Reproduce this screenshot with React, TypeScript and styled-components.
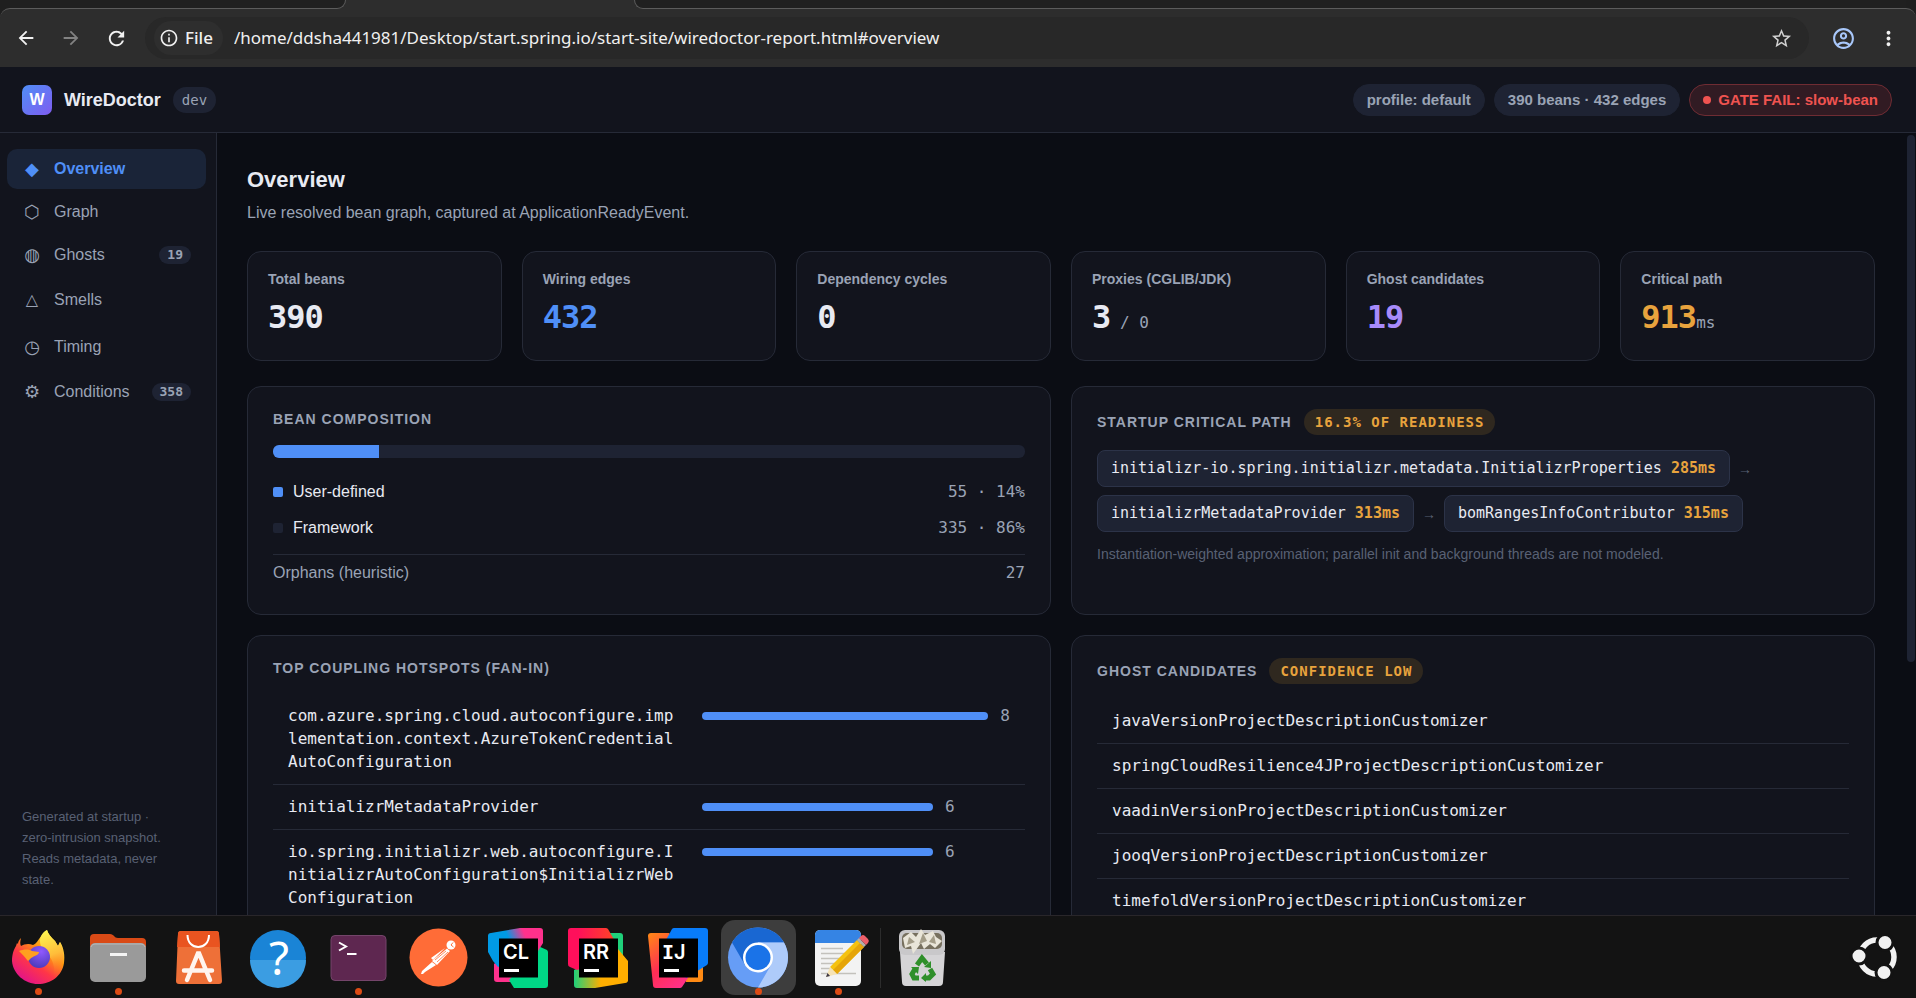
import React from "react";
import styled, { createGlobalStyle } from "styled-components";
import {
  MdArrowBack,
  MdArrowForward,
  MdRefresh,
  MdInfoOutline,
  MdStarBorder,
  MdOutlineAccountCircle,
  MdMoreVert,
} from "react-icons/md";

const color = {
  bg: "#0b0d14",
  surface: "#12141d",
  raised: "#1e2333",
  line: "#262a37",
  text: "#e8eaf2",
  muted: "#9aa3b5",
  faint: "#596174",
  blue: "#4f8ff7",
  purple: "#a78bfa",
  amber: "#e8a33d",
  red: "#ef5350",
};

const mono = `"DejaVu Sans Mono", monospace`;

const GlobalStyle = createGlobalStyle`
  *, *::before, *::after { box-sizing: border-box; }
  body {
    margin: 0;
    background: ${color.bg};
    color: ${color.text};
    font-family: "Liberation Sans", Arial, sans-serif;
    font-size: 16px;
    line-height: 24px;
  }
  a { color: inherit; text-decoration: none; }
  button { font: inherit; color: inherit; border: 0; padding: 0; background: none; cursor: pointer; }
`;

const Desktop = styled.div`
  height: 100vh;
  display: flex;
  flex-direction: column;
  overflow: hidden;
`;

/* ---------- browser chrome ---------- */

const TabStrip = styled.div`
  display: flex;
  height: 8px;
  flex: none;
  background: #1f1f1f;
`;

const IdleTab = styled.div<{ $side: "left" | "right" }>`
  position: relative;
  z-index: 2;
  height: 9px;
  background: #202020;
  border-bottom: 1px solid #5c5c5c;
  ${(p) =>
    p.$side === "left"
      ? `width: 336px; margin-left: 10px; border-right: 1px solid #5c5c5c; border-bottom-right-radius: 10px;`
      : `flex: 1; margin-right: 10px; border-left: 1px solid #5c5c5c; border-bottom-left-radius: 10px;`}
`;

const ActiveTab = styled.div`
  position: relative;
  z-index: 1;
  width: 308px;
  height: 9px;
  margin: 0 -10px;
  background: #2d2d2d;
`;

const ToolbarBack = styled.div`
  background: #1f1f1f;
  flex: none;
`;

const Toolbar = styled.div`
  display: flex;
  align-items: center;
  height: 59px;
  padding: 0 12px 0 10px;
  background: #2d2d2d;
  border-top: 1px solid #5c5c5c;
  border-radius: 10px 10px 0 0;
`;

const ToolButton = styled.button<{ $tone?: string }>`
  display: grid;
  place-items: center;
  width: 32px;
  height: 32px;
  margin-right: 13px;
  color: ${(p) => p.$tone ?? "#f1f1f1"};
  &:last-child { margin-right: 0; }
`;

const Omnibox = styled.div`
  display: flex;
  align-items: center;
  flex: 1;
  height: 42px;
  margin-right: 18px;
  padding: 0 12px 0 9px;
  background: #282828;
  border-radius: 21px;
  font-family: "Noto Sans", "Open Sans", sans-serif;
  font-size: 17px;
  color: #f0f0f0;
`;

const SchemeChip = styled.button`
  display: flex;
  align-items: center;
  gap: 6px;
  height: 34px;
  padding: 0 10px 0 5px;
  border-radius: 17px;
  background: #2e2e2e;
  font-weight: 500;
`;

const Address = styled.input`
  flex: 1;
  min-width: 0;
  margin-left: 11px;
  padding: 0;
  border: 0;
  outline: 0;
  background: transparent;
  color: inherit;
  font: inherit;
`;

/* ---------- report header ---------- */

const Header = styled.header`
  display: flex;
  align-items: center;
  justify-content: space-between;
  flex: none;
  height: 66px;
  padding: 0 24px 0 22px;
  background: ${color.surface};
  border-bottom: 1px solid ${color.line};
`;

const Brand = styled.div`
  display: flex;
  align-items: center;
  gap: 12px;
  font-size: 18px;
  font-weight: 700;
`;

const BrandMark = styled.div`
  display: grid;
  place-items: center;
  width: 30px;
  height: 30px;
  border-radius: 7px;
  background: linear-gradient(135deg, #4f8ff7, #7f5cf0);
  color: #fff;
  font-size: 16px;
`;

const VersionTag = styled.span`
  padding: 0 9px;
  border-radius: 13px;
  background: ${color.raised};
  color: ${color.muted};
  font: 400 14px/26px ${mono};
`;

const Pills = styled.div`
  display: flex;
  gap: 9px;
`;

const Pill = styled.span<{ $danger?: boolean }>`
  display: flex;
  align-items: center;
  gap: 7px;
  height: 32px;
  padding: 0 13px;
  border-radius: 16px;
  border: 1px solid ${(p) => (p.$danger ? "#6f2c33" : color.raised)};
  background: ${(p) => (p.$danger ? "#311b23" : color.raised)};
  color: ${(p) => (p.$danger ? color.red : color.muted)};
  font-size: 15px;
  font-weight: 700;
`;

const PillDot = styled.i`
  width: 8px;
  height: 8px;
  border-radius: 50%;
  background: currentColor;
`;

/* ---------- body ---------- */

const Body = styled.div`
  display: flex;
  flex: 1;
  min-height: 0;
`;

const Sidebar = styled.aside`
  display: flex;
  flex-direction: column;
  justify-content: space-between;
  width: 217px;
  flex: none;
  padding: 16px 10px 25px 7px;
  background: ${color.surface};
  border-right: 1px solid ${color.line};
`;

const Nav = styled.nav`
  display: flex;
  flex-direction: column;
  gap: 3px;
`;

const NavLink = styled.a<{ $active?: boolean; $tall?: boolean }>`
  display: flex;
  align-items: center;
  gap: 12px;
  height: ${(p) => (p.$tall ? 44 : 40)}px;
  padding: 0 15px;
  border-radius: 10px;
  background: ${(p) => (p.$active ? "#1a2438" : "transparent")};
  color: ${(p) => (p.$active ? color.blue : color.muted)};
  font-weight: ${(p) => (p.$active ? 700 : 400)};
`;

const NavGlyph = styled.span<{ $small?: boolean }>`
  width: 20px;
  text-align: center;
  font-family: "DejaVu Sans", sans-serif;
  font-size: ${(p) => (p.$small ? 16 : 18)}px;
  font-weight: 400;
  line-height: 24px;
`;

const NavCount = styled.span`
  margin-left: auto;
  padding: 0 8px;
  border-radius: 9px;
  background: ${color.raised};
  font: 700 13px/18px ${mono};
`;

const SideNote = styled.p`
  margin: 0;
  padding: 0 25px 0 15px;
  color: ${color.faint};
  font-size: 13px;
  line-height: 21px;
`;

const Main = styled.main`
  flex: 1;
  min-width: 0;
  overflow: hidden;
  padding: 30px;
`;

const ScrollTrack = styled.div`
  flex: none;
  width: 11px;
  padding: 2px 1px 0 2px;
`;

const ScrollThumb = styled.div`
  height: 67.5%;
  border-radius: 4px;
  background: ${color.raised};
`;

const PageTitle = styled.h1`
  margin: 0 0 5px;
  font-size: 22px;
  line-height: 33px;
`;

const Lead = styled.p`
  margin: 0 0 26px;
  color: ${color.muted};
`;

const Stats = styled.section`
  display: grid;
  grid-template-columns: repeat(6, 1fr);
  gap: 20px;
  margin-bottom: 25px;
`;

const StatCard = styled.div`
  padding: 17px 20px 19px;
  background: ${color.surface};
  border: 1px solid ${color.line};
  border-radius: 14px;
`;

const StatLabel = styled.div`
  margin-bottom: 3px;
  color: ${color.muted};
  font-size: 14px;
  font-weight: 700;
  line-height: 21px;
`;

const StatValue = styled.div<{ $tone?: string }>`
  color: ${(p) => p.$tone ?? color.text};
  font: 700 32px/48px ${mono};
  letter-spacing: -1px;
  white-space: pre;
`;

const StatUnit = styled.span`
  color: ${color.muted};
  font-size: 16px;
  font-weight: 400;
  line-height: 16px;
  letter-spacing: 0;
`;

const Panels = styled.div`
  display: grid;
  grid-template-columns: 1fr 1fr;
  gap: 20px;
`;

const Panel = styled.section`
  min-width: 0;
  padding: 22px 25px 23px;
  background: ${color.surface};
  border: 1px solid ${color.line};
  border-radius: 14px;
`;

const PanelTitle = styled.h2`
  display: flex;
  align-items: center;
  gap: 12px;
  margin: 0 0 15px;
  color: ${color.muted};
  font-size: 14px;
  line-height: 21px;
  letter-spacing: 1px;
  text-transform: uppercase;
`;

const TitleTag = styled.span`
  padding: 0 11px;
  border-radius: 13px;
  background: #2f281f;
  color: ${color.amber};
  font: 700 14px/26px ${mono};
`;

const Meter = styled.div`
  height: 13px;
  margin-bottom: 16px;
  border-radius: 6px;
  overflow: hidden;
  background: ${color.raised};
`;

const MeterFill = styled.div`
  height: 100%;
  background: ${color.blue};
`;

const LegendRow = styled.div<{ $summary?: boolean }>`
  display: flex;
  align-items: center;
  gap: 10px;
  padding: 6px 0;
  ${(p) =>
    p.$summary &&
    `margin-top: 8px; border-top: 1px solid ${color.line}; color: ${color.muted};`}
`;

const Swatch = styled.i<{ $tone: string }>`
  width: 10px;
  height: 10px;
  border-radius: 2px;
  background: ${(p) => p.$tone};
`;

const LegendValue = styled.span`
  margin-left: auto;
  color: ${color.muted};
  font-family: ${mono};
`;

const Path = styled.div`
  display: flex;
  flex-wrap: wrap;
  align-items: center;
  gap: 8px;
  margin-bottom: 10px;
`;

const PathStep = styled.span`
  padding: 0 13px;
  border: 1px solid #2c3348;
  border-radius: 8px;
  background: ${color.raised};
  font: 400 15px/35px ${mono};
  & > b { color: ${color.amber}; }
`;

const PathArrow = styled.span`
  color: ${color.faint};
  font-size: 14px;
`;

const Note = styled.p`
  margin: 0;
  color: ${color.faint};
  font-size: 14px;
`;

const HotspotTable = styled.table`
  width: 100%;
  table-layout: fixed;
  border-collapse: separate;
  border-spacing: 0;
  font: 400 16px/23px ${mono};
`;

const HotspotName = styled.td`
  width: 55%;
  padding: 10px 10px 11px 15px;
  border-bottom: 1px solid ${color.line};
  vertical-align: top;
  word-break: break-all;
`;

const HotspotScore = styled.td`
  padding: 10px 15px 11px;
  border-bottom: 1px solid ${color.line};
  vertical-align: top;
`;

const ScoreRow = styled.div`
  display: flex;
  align-items: center;
  gap: 12px;
  color: ${color.muted};
`;

const ScoreBar = styled.div`
  height: 8px;
  border-radius: 4px;
  background: ${color.blue};
`;

const GhostList = styled.ul`
  margin: 0;
  padding: 0;
  list-style: none;
  font: 400 16px/23px ${mono};
`;

const GhostItem = styled.li`
  padding: 10px 15px 11px;
  border-bottom: 1px solid ${color.line};
`;

/* ---------- dock ---------- */

const Dock = styled.footer`
  display: flex;
  align-items: flex-start;
  flex: none;
  gap: 5px;
  height: 83px;
  padding: 4px 2px 0 1px;
  background: #131313;
  border-top: 1px solid #29262a;
`;

const DockButton = styled.button<{ $active?: boolean; $end?: boolean }>`
  position: relative;
  width: 75px;
  height: 75px;
  border-radius: 14px;
  background: ${(p) => (p.$active ? "#3d3d3d" : "transparent")};
  margin-left: ${(p) => (p.$end ? "auto" : "0")};
  & > svg { display: block; }
`;

const RunningDot = styled.i`
  position: absolute;
  left: 34px;
  bottom: 0;
  width: 7px;
  height: 7px;
  border-radius: 50%;
  background: #dd4b14;
`;

const DockDivider = styled.div`
  width: 1px;
  height: 60px;
  margin: 8px -1px 0;
  background: #2c2c2c;
`;

const Icon = ({ children }: { children: React.ReactNode }) => (
  <svg width="75" height="75" viewBox="0 0 75 75" aria-hidden="true">
    {children}
  </svg>
);

const FirefoxIcon = () => (
  <Icon>
    <defs>
      <linearGradient id="ffBody" x1="0.85" y1="0.1" x2="0.25" y2="0.95">
        <stop offset="0" stopColor="#fff44f" />
        <stop offset="0.35" stopColor="#ff980e" />
        <stop offset="0.65" stopColor="#ff3647" />
        <stop offset="1" stopColor="#e31587" />
      </linearGradient>
      <linearGradient id="ffTail" x1="0.4" y1="0" x2="0.6" y2="1">
        <stop offset="0" stopColor="#fff44f" />
        <stop offset="0.55" stopColor="#ffbd3a" />
        <stop offset="1" stopColor="#ff6a2b" stopOpacity="0" />
      </linearGradient>
      <radialGradient id="ffGlobe" cx="0.6" cy="0.25" r="0.8">
        <stop offset="0" stopColor="#9059ff" />
        <stop offset="1" stopColor="#4a3ab8" />
      </radialGradient>
    </defs>
    <path d="M20 18c-1 4-1 6 0 8 3-2 8-3 12-1 4-1 6-8 14-15 1 4 4 7 8 11l3 5 2-4c4 6 5 14 4 21-2 13-13 21-26 21S12 54 11 41c0-7 2-12 4-15l1-3 1 1c0-2 1-4 3-6z" fill="url(#ffBody)" />
    <path d="M46 10c1 4 4 7 8 11l3 5 2-4c6 12 4 25-6 33 1-8-1-15-6-20-4-4-8-8-8-14 0-5 3-9 7-11z" fill="url(#ffTail)" />
    <circle cx="38" cy="37" r="11" fill="url(#ffGlobe)" />
    <path d="M18 31c5-2 10-2 13 0l7 1c0 3-5 4-6 5-3 1-3 3-5 4 0 0-2-3-9-10z" fill="#ff9f1f" />
  </Icon>
);

const FilesIcon = () => (
  <Icon>
    <path d="M9 25v-7a4 4 0 0 1 4-4h16c4 0 4 4 8 4h24a4 4 0 0 1 4 4v6H9z" fill="#d94a16" />
    <rect x="9" y="23" width="56" height="39" rx="5" fill="#9a9a9a" />
    <path d="M10 27a4 4 0 0 1 4-3h46a4 4 0 0 1 4 3" fill="none" stroke="#b8b8b8" />
    <rect x="29" y="33" width="17" height="3" fill="#f4f4f4" />
  </Icon>
);

const SoftwareIcon = () => (
  <Icon>
    <path d="M20 11h35a3 3 0 0 1 3 3l3 47a3 3 0 0 1-3 3H18a3 3 0 0 1-3-3l2-47a3 3 0 0 1 3-3z" fill="#ee7038" />
    <path d="M20 11h35a3 3 0 0 1 3 3l1 13H16l1-13a3 3 0 0 1 3-3z" fill="#e95420" />
    <path d="M26.5 15c0 16 21.5 16 21.5 0" fill="none" stroke="#fff" strokeWidth="2" />
    <path d="M26 60 37.5 32 49 60M23 50.5h28" fill="none" stroke="#fff4ee" strokeWidth="4.5" strokeLinejoin="bevel" strokeLinecap="round" />
  </Icon>
);

const HelpIcon = () => (
  <Icon>
    <circle cx="37" cy="38" r="28" fill="#1a84d6" />
    <path d="M9 40a28 28 0 0 0 56 0z" fill="#3b9de2" />
    <text x="38" y="55" textAnchor="middle" fontFamily="Noto Sans, sans-serif" fontSize="46" fill="#fff">?</text>
  </Icon>
);

const TerminalIcon = () => (
  <Icon>
    <rect x="10" y="15.5" width="55" height="45" rx="4" fill="#5e2750" stroke="#74456a" />
    <path d="m18 22.5 7 4-7 4M26 34h9.5" fill="none" stroke="#fff" strokeWidth="2" />
  </Icon>
);

const PostmanIcon = () => (
  <Icon>
    <circle cx="37.5" cy="37.5" r="29" fill="#ff6c37" />
    <circle cx="50" cy="25" r="4.5" fill="#fff" />
    <path d="m50 25 2-2.5M50 25l2.5 2" stroke="#ff6c37" fill="none" />
    <path d="M44 28 30 38l2 2zM46 28.500 49 31 36 45l-5-4z" fill="#fff" />
    <path d="m34 40 11-9M36 42l11-10" stroke="#ff6c37" strokeWidth="0.8" />
    <path d="m31 42 4 3-11 7-2 2h-2l1-3z" fill="#fff" />
  </Icon>
);

const IdeFace = ({ label }: { label: string }) => (
  <>
    <rect x="18" y="18.5" width="39" height="39" fill="#000" />
    <text x="22" y="38.5" fontFamily="Inter, sans-serif" fontWeight="600" fontSize="20" fill="#fff">{label}</text>
    <rect x="23" y="49" width="15" height="3" fill="#fff" />
  </>
);

const ClionIcon = () => (
  <Icon>
    <defs>
      <linearGradient id="clTop" x1="0" x2="1" y1="0.3" y2="0">
        <stop offset="0.35" stopColor="#009ae5" />
        <stop offset="0.65" stopColor="#ff318c" />
      </linearGradient>
    </defs>
    <path d="M13 44 30 30l10 10-9 22H16a3 3 0 0 1-3-3z" fill="#ff318c" />
    <path d="m57 26 9 4a3 3 0 0 1 1 2v33a3 3 0 0 1-3 3H33l-5-8 20-22z" fill="#00d886" />
    <path d="M7 16a3 3 0 0 1 3-3l29-5h20a3 3 0 0 1 3 3v12l-5 8-40 16-5-6-5-9z" fill="url(#clTop)" />
    <IdeFace label="CL" />
  </Icon>
);

const RustRoverIcon = () => (
  <Icon>
    <defs>
      <linearGradient id="rrTop" x1="0" x2="1">
        <stop offset="0.2" stopColor="#ff0f5b" />
        <stop offset="1" stopColor="#ff4524" />
      </linearGradient>
      <linearGradient id="rrLow" x1="0" x2="1">
        <stop offset="0" stopColor="#1fd07a" />
        <stop offset="0.5" stopColor="#ffae00" />
      </linearGradient>
    </defs>
    <path d="M45 13h14a3 3 0 0 1 3 3v24H45z" fill="#1fd07a" />
    <path d="m13 50 30-15 14-6 10 12v20a3 3 0 0 1-3 2l-30 5H16a3 3 0 0 1-3-3z" fill="url(#rrLow)" />
    <path d="M7 11a3 3 0 0 1 3-3h34a3 3 0 0 1 3 1l8 14-20 20-19 7-7-3a3 3 0 0 1-2-3z" fill="url(#rrTop)" />
    <IdeFace label="RR" />
  </Icon>
);

const IdeaIcon = () => (
  <Icon>
    <defs>
      <linearGradient id="ijLow" x1="0" x2="0.7" y1="0" y2="1">
        <stop offset="0" stopColor="#ff8a14" />
        <stop offset="0.55" stopColor="#ff2d55" />
        <stop offset="1" stopColor="#ff318c" />
      </linearGradient>
    </defs>
    <path d="M45 45h17v14a3 3 0 0 1-3 3H45z" fill="#ff8a14" />
    <path d="M7 16a3 3 0 0 1 3-3h18l29 30-16 24a3 3 0 0 1-2 1H15a3 3 0 0 1-3-3z" fill="url(#ijLow)" />
    <path d="M31 9a3 3 0 0 1 2-1h31a3 3 0 0 1 3 3v32a3 3 0 0 1-1 2L45 58 25 20z" fill="#087cfa" />
    <rect x="18" y="18.5" width="39" height="39" fill="#000" />
    <text x="21" y="38.5" fontFamily="DejaVu Sans Mono, monospace" fontWeight="700" fontSize="20" fill="#fff">I</text>
    <text x="33" y="38.5" fontFamily="Inter, sans-serif" fontWeight="600" fontSize="20" fill="#fff">J</text>
    <rect x="23" y="49" width="15" height="3" fill="#fff" />
  </Icon>
);

const ChromiumIcon = () => (
  <Icon>
    <circle cx="37" cy="37.5" r="30" fill="#669df6" />
    <path d="M37 22.5h26A30 30 0 0 0 11 22.5L24 45z" fill="#1967d2" />
    <path d="M37 22.5h26A30 30 0 0 1 37 67.5L50 45z" fill="#aecbfa" />
    <circle cx="37" cy="37.5" r="15" fill="#fff" />
    <circle cx="37" cy="37.5" r="12.5" fill="#1a73e8" />
  </Icon>
);

const EditorIcon = () => (
  <Icon>
    <rect x="14" y="10" width="46" height="56" rx="5" fill="#f3f3f3" />
    <path d="M14 23v-8a5 5 0 0 1 5-5h36a5 5 0 0 1 5 5v8z" fill="#3584e4" />
    <path d="M20 28.5h22M20 33.5h30M20 38.5h26M20 43.5h24M20 48.5h18M20 53.5h35" stroke="#c3c1bc" strokeWidth="1.5" />
    <path d="m29 47 27-27 7 7-27 27z" fill="#f5c211" />
    <path d="m32 50 27-27 4 4-27 27z" fill="#e5a50a" />
    <path d="m29 47-4 10 11-3z" fill="#f6e3b5" />
    <path d="m26.5 53-1.5 4 4-1z" fill="#3d3846" />
    <path d="m56 20 2-2 7 7-2 2z" fill="#b0afac" />
    <path d="m58 18 2-2a3 3 0 0 1 4 0l3 3a3 3 0 0 1 0 4l-2 2z" fill="#ed5f6b" />
  </Icon>
);

const TrashIcon = () => (
  <Icon>
    <path d="M15 32h45l-2 30a4 4 0 0 1-4 4H21a4 4 0 0 1-4-4z" fill="#d5d4d6" />
    <rect x="14" y="10" width="46" height="25" rx="6" fill="#c9c8ca" />
    <rect x="17" y="13" width="40" height="16" rx="5" fill="#77705f" />
    <path d="m18 18 8-6 5 5 5-8 4 6 8-4 3 6 6 4-7 7-5-4-6 5-3-6-8 11-2-8-6 2z" fill="#e9e5d9" />
    <path d="m24 17 6 5-8 3zM38 13l4 8-8 3zM49 15l2 9-7-2z" fill="#a39c88" />
    <g fill="none" stroke="#2f8f2a" strokeWidth="5">
      <path d="m32 45 5-7 5 6" />
      <path d="m45 49 3 5-4 4h-5" />
      <path d="M34 58h-5l-2-4 3-5" />
    </g>
    <path d="m39 47 7 1V41zM41 53v9l-5-4zM26 47h8l-1 7z" fill="#2f8f2a" />
  </Icon>
);

const UbuntuIcon = () => (
  <Icon>
    <circle cx="38" cy="37" r="17" fill="none" stroke="#f2f2f2" strokeWidth="5.5" />
    <g fill="#f2f2f2" stroke="#131313" strokeWidth="3">
      <circle cx="20" cy="36" r="8" />
      <circle cx="46" cy="22.5" r="8" />
      <circle cx="45" cy="52.5" r="8" />
    </g>
  </Icon>
);

/* ---------- data ---------- */

const navItems = [
  { label: "Overview", glyph: "◆", active: true },
  { label: "Graph", glyph: "⬡" },
  { label: "Ghosts", glyph: "◍", count: 19 },
  { label: "Smells", glyph: "△", tall: true, small: true },
  { label: "Timing", glyph: "◷", tall: true },
  { label: "Conditions", glyph: "⚙", count: 358 },
];

const stats = [
  { label: "Total beans", value: "390" },
  { label: "Wiring edges", value: "432", tone: color.blue },
  { label: "Dependency cycles", value: "0" },
  { label: "Proxies (CGLIB/JDK)", value: "3", unit: " / 0" },
  { label: "Ghost candidates", value: "19", tone: color.purple },
  { label: "Critical path", value: "913", unit: "ms", tone: color.amber },
];

const pathSteps = [
  { bean: "initializr-io.spring.initializr.metadata.InitializrProperties", time: "285ms" },
  { bean: "initializrMetadataProvider", time: "313ms" },
  { bean: "bomRangesInfoContributor", time: "315ms" },
];

const hotspots = [
  { bean: "com.azure.spring.cloud.autoconfigure.implementation.context.AzureTokenCredentialAutoConfiguration", fanIn: 8 },
  { bean: "initializrMetadataProvider", fanIn: 6 },
  { bean: "io.spring.initializr.web.autoconfigure.InitializrAutoConfiguration$InitializrWebConfiguration", fanIn: 6 },
];

const ghosts = [
  "javaVersionProjectDescriptionCustomizer",
  "springCloudResilience4JProjectDescriptionCustomizer",
  "vaadinVersionProjectDescriptionCustomizer",
  "jooqVersionProjectDescriptionCustomizer",
  "timefoldVersionProjectDescriptionCustomizer",
];

const dockApps = [
  { name: "Firefox", Art: FirefoxIcon, running: true },
  { name: "Files", Art: FilesIcon, running: true },
  { name: "App Center", Art: SoftwareIcon },
  { name: "Help", Art: HelpIcon },
  { name: "Terminal", Art: TerminalIcon, running: true },
  { name: "Postman", Art: PostmanIcon },
  { name: "CLion", Art: ClionIcon },
  { name: "RustRover", Art: RustRoverIcon },
  { name: "IntelliJ IDEA", Art: IdeaIcon },
  { name: "Chromium", Art: ChromiumIcon, running: true, active: true },
  { name: "Text Editor", Art: EditorIcon, running: true },
];

export default function App() {
  return (
    <Desktop>
      <GlobalStyle />
      <TabStrip>
        <IdleTab $side="left" />
        <ActiveTab />
        <IdleTab $side="right" />
      </TabStrip>
      <ToolbarBack>
        <Toolbar>
          <ToolButton aria-label="Back"><MdArrowBack size={22} /></ToolButton>
          <ToolButton aria-label="Forward" $tone="#828282"><MdArrowForward size={22} /></ToolButton>
          <ToolButton aria-label="Reload"><MdRefresh size={23} /></ToolButton>
          <Omnibox>
            <SchemeChip><MdInfoOutline size={20} />File</SchemeChip>
            <Address
              aria-label="Address"
              defaultValue="/home/ddsha441981/Desktop/start.spring.io/start-site/wiredoctor-report.html#overview"
            />
            <ToolButton aria-label="Bookmark this page" $tone="#d0d0d0"><MdStarBorder size={23} /></ToolButton>
          </Omnibox>
          <ToolButton aria-label="Profile" $tone="#a8c7fa"><MdOutlineAccountCircle size={25} /></ToolButton>
          <ToolButton aria-label="Menu"><MdMoreVert size={23} /></ToolButton>
        </Toolbar>
      </ToolbarBack>

      <Header>
        <Brand>
          <BrandMark>W</BrandMark>
          WireDoctor
          <VersionTag>dev</VersionTag>
        </Brand>
        <Pills>
          <Pill>profile: default</Pill>
          <Pill>390 beans · 432 edges</Pill>
          <Pill $danger><PillDot />GATE FAIL: slow-bean</Pill>
        </Pills>
      </Header>

      <Body>
        <Sidebar>
          <Nav>
            {navItems.map((n) => (
              <NavLink key={n.label} href={`#${n.label.toLowerCase()}`} $active={n.active} $tall={n.tall}>
                <NavGlyph aria-hidden="true" $small={n.small}>{n.glyph}</NavGlyph>
                {n.label}
                {n.count && <NavCount>{n.count}</NavCount>}
              </NavLink>
            ))}
          </Nav>
          <SideNote>Generated at startup · zero-intrusion snapshot. Reads metadata, never state.</SideNote>
        </Sidebar>

        <Main>
          <PageTitle>Overview</PageTitle>
          <Lead>Live resolved bean graph, captured at ApplicationReadyEvent.</Lead>

          <Stats>
            {stats.map((s) => (
              <StatCard key={s.label}>
                <StatLabel>{s.label}</StatLabel>
                <StatValue $tone={s.tone}>
                  {s.value}
                  {s.unit && <StatUnit>{s.unit}</StatUnit>}
                </StatValue>
              </StatCard>
            ))}
          </Stats>

          <Panels>
            <Panel>
              <PanelTitle>Bean composition</PanelTitle>
              <Meter><MeterFill style={{ width: `${(55 / 390) * 100}%` }} /></Meter>
              <LegendRow>
                <Swatch $tone={color.blue} />User-defined<LegendValue>55 · 14%</LegendValue>
              </LegendRow>
              <LegendRow>
                <Swatch $tone={color.raised} />Framework<LegendValue>335 · 86%</LegendValue>
              </LegendRow>
              <LegendRow $summary>
                Orphans (heuristic)<LegendValue>27</LegendValue>
              </LegendRow>
            </Panel>

            <Panel>
              <PanelTitle>Startup critical path <TitleTag>16.3% of readiness</TitleTag></PanelTitle>
              <Path>
                {pathSteps.map((s, i) => (
                  <React.Fragment key={s.bean}>
                    {i > 0 && <PathArrow>→</PathArrow>}
                    <PathStep>{s.bean} <b>{s.time}</b></PathStep>
                  </React.Fragment>
                ))}
              </Path>
              <Note>Instantiation-weighted approximation; parallel init and background threads are not modeled.</Note>
            </Panel>

            <Panel>
              <PanelTitle>Top coupling hotspots (fan-in)</PanelTitle>
              <HotspotTable>
                <tbody>
                  {hotspots.map((h) => (
                    <tr key={h.bean}>
                      <HotspotName>{h.bean}</HotspotName>
                      <HotspotScore>
                        <ScoreRow>
                          <ScoreBar style={{ width: `${(h.fanIn / 8) * 100}%` }} />
                          {h.fanIn}
                        </ScoreRow>
                      </HotspotScore>
                    </tr>
                  ))}
                </tbody>
              </HotspotTable>
            </Panel>

            <Panel>
              <PanelTitle>Ghost candidates <TitleTag>confidence low</TitleTag></PanelTitle>
              <GhostList>
                {ghosts.map((g) => <GhostItem key={g}>{g}</GhostItem>)}
              </GhostList>
            </Panel>
          </Panels>
        </Main>
        <ScrollTrack><ScrollThumb /></ScrollTrack>
      </Body>

      <Dock>
        {dockApps.map(({ name, Art, running, active }) => (
          <DockButton key={name} aria-label={name} $active={active}>
            <Art />
            {running && <RunningDot />}
          </DockButton>
        ))}
        <DockDivider />
        <DockButton aria-label="Trash"><TrashIcon /></DockButton>
        <DockButton aria-label="Show applications" $end><UbuntuIcon /></DockButton>
      </Dock>
    </Desktop>
  );
}
